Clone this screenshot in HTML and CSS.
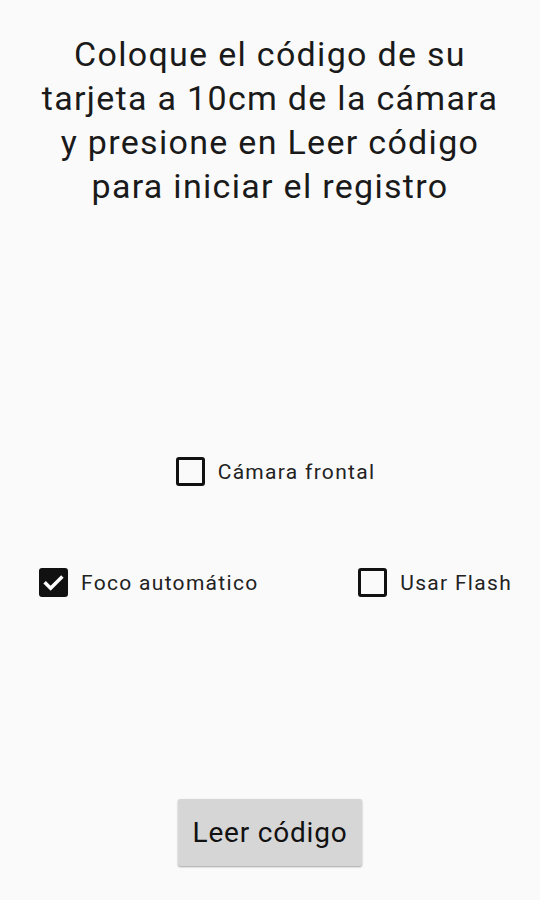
FILE: index.html
```html
<!DOCTYPE html>
<html lang="es">
<head>
    <meta charset="UTF-8">
    <meta name="viewport" content="width=device-width, initial-scale=1.0">
    <title>Registro</title>
    <link rel="stylesheet" href="styles.css">
</head>
<body>
    <div class="screen">
        <h1 class="instructions">Coloque el código de su<br>tarjeta a 10cm de la cámara<br>y presione en Leer código<br>para iniciar el registro</h1>

        <div class="options">
            <div class="row center">
                <label class="check">
                    <span class="box"></span>
                    <span>Cámara frontal</span>
                </label>
            </div>
            <div class="row split">
                <label class="check">
                    <span class="box checked">
                        <svg viewBox="0 0 24 24" width="24" height="24"><path d="M4 12.5l5 5L20 6.5" fill="none" stroke="#fff" stroke-width="3.6" stroke-linecap="square"/></svg>
                    </span>
                    <span>Foco automático</span>
                </label>
                <label class="check">
                    <span class="box"></span>
                    <span>Usar Flash</span>
                </label>
            </div>
        </div>

        <div class="actions">
            <button class="read-btn">Leer código</button>
        </div>
    </div>
</body>
</html>
```

FILE: styles.css
```css
body {
    margin: 0;
    background: #fafafa;
    font-family: Roboto, "Noto Sans", sans-serif;
    color: #1a1a1a;
}
.screen {
    width: 540px;
    height: 900px;
    display: flex;
    flex-direction: column;
}
.instructions {
    margin: 32px 0 0;
    font-size: 34px;
    font-weight: 400;
    line-height: 44px;
    letter-spacing: 1.3px;
    text-align: center;
    white-space: nowrap;
}
.options {
    margin-top: 249px;
}
.row {
    display: flex;
    align-items: center;
}
.center {
    justify-content: center;
    padding-left: 11px;
}
.split {
    margin-top: 82px;
    justify-content: space-between;
    padding: 0 28px 0 39px;
}
.check {
    display: flex;
    align-items: center;
    gap: 13px;
    font-size: 21px;
    letter-spacing: 1.3px;
    color: #222;
}
.box {
    width: 23px;
    height: 23px;
    border: 3px solid #111;
    border-radius: 3px;
    display: flex;
    align-items: center;
    justify-content: center;
}
.box.checked {
    background: #111;
}
.actions {
    margin-top: auto;
    margin-bottom: 34px;
    display: flex;
    justify-content: center;
}
.read-btn {
    width: 184px;
    height: 67px;
    background: #d6d6d6;
    border: none;
    border-radius: 2px;
    box-shadow: 0 1px 2px rgba(0,0,0,0.35);
    font-family: Roboto, "Noto Sans", sans-serif;
    font-size: 28px;
    letter-spacing: 0.8px;
    color: #111;
    cursor: pointer;
}
```
